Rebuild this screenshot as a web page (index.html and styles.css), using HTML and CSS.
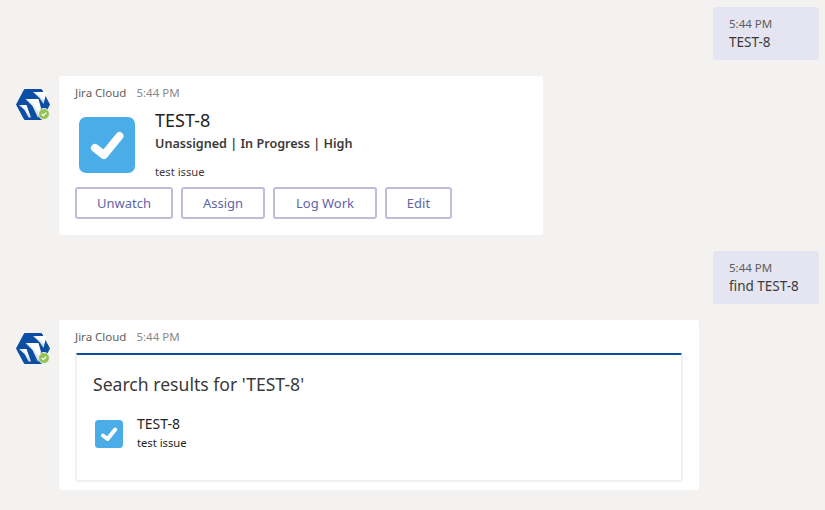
FILE: index.html
```html
<!DOCTYPE html>
<html>
  <head>
    <meta name="viewport" content="width=device-width, initial-scale=1.0">
    <title>Jira Cloud chat</title>
    <link rel="stylesheet" href="styles.css">
  </head>
  <body>
    <svg class="defs" width="0" height="0">
      <defs>
        <linearGradient id="arrow-fade" x1="1" y1="0" x2="0" y2="1">
          <stop offset="0.35" stop-color="#ffffff"/>
          <stop offset="1" stop-color="#4f78bf"/>
        </linearGradient>
        <symbol id="bot" viewBox="0 0 34 32">
          <path d="M8.5 0.5H25.5L33.5 15.5L25.5 30.5H8.5L0.5 15.5Z" fill="#0b4ea2" stroke="#0b4ea2" stroke-linejoin="round"/>
          <path d="M17 3H30.5L27.5 15L23.5 9Z" fill="url(#arrow-fade)"/>
          <path d="M9.5 10H22.5L25 19L22 29L16.5 17Z" fill="url(#arrow-fade)"/>
          <path d="M3 16H10.5L15 28.5H12.5L8.5 21Z" fill="url(#arrow-fade)"/>
          <circle cx="28" cy="25" r="5.5" fill="#92c353" stroke="#f3f2f1" stroke-width="1"/>
          <path d="M25.7 25L27.4 26.7L30.3 23.6" fill="none" stroke="#fff" stroke-width="1.2"/>
        </symbol>
        <symbol id="task" viewBox="0 0 56 56">
          <rect width="56" height="56" rx="7" fill="#4bade8"/>
          <path d="M16 31L25 38L40.5 19" fill="none" stroke="#fff" stroke-width="8" stroke-linecap="round" stroke-linejoin="round"/>
        </symbol>
      </defs>
    </svg>

    <div class="sent">
      <div class="bubble">
        <div class="time">5:44 PM</div>
        <div>TEST-8</div>
      </div>
    </div>

    <div class="received">
      <svg class="avatar"><use href="#bot"/></svg>
      <div class="card card-small">
        <div class="meta"><span>Jira Cloud</span><span class="meta-time">5:44 PM</span></div>
        <div class="issue">
          <svg class="issue-icon"><use href="#task"/></svg>
          <div>
            <div class="issue-title">TEST-8</div>
            <div class="issue-sub">Unassigned | In Progress | High</div>
            <div class="issue-desc">test issue</div>
          </div>
        </div>
        <div class="actions">
          <button class="btn-unwatch">Unwatch</button>
          <button class="btn-assign">Assign</button>
          <button class="btn-log">Log Work</button>
          <button class="btn-edit">Edit</button>
        </div>
      </div>
    </div>

    <div class="sent">
      <div class="bubble">
        <div class="time">5:44 PM</div>
        <div>find TEST-8</div>
      </div>
    </div>

    <div class="received">
      <svg class="avatar"><use href="#bot"/></svg>
      <div class="card card-wide">
        <div class="meta"><span>Jira Cloud</span><span class="meta-time">5:44 PM</span></div>
        <div class="results">
          <h2>Search results for 'TEST-8'</h2>
          <div class="result">
            <svg class="result-icon"><use href="#task"/></svg>
            <div>
              <div class="result-title">TEST-8</div>
              <div class="result-desc">test issue</div>
            </div>
          </div>
        </div>
      </div>
    </div>
  </body>
</html>
```

FILE: styles.css
```css
body {
  font-family: "Noto Sans", "Open Sans", sans-serif;
  margin: 0;
  padding: 7px 6px 0 16px;
  background-color: #f3f2f1;
  color: #252423;
  overflow: hidden;
}
.defs {
  position: absolute;
}
.sent {
  display: flex;
  justify-content: flex-end;
  margin-bottom: 16px;
}
.bubble {
  width: 106px;
  height: 53px;
  box-sizing: border-box;
  padding: 8px 16px;
  background-color: #e5e5f1;
  border-radius: 3px;
  font-size: 13.5px;
  line-height: 18px;
  color: #3b3a39;
}
.time {
  font-size: 11.5px;
  line-height: 17px;
  margin-bottom: 1px;
  color: #605e5c;
}
.received {
  display: flex;
  align-items: flex-start;
  margin-bottom: 16px;
}
.avatar {
  width: 34px;
  height: 32px;
  margin: 13px 9px 0 0;
  flex-shrink: 0;
}
.card {
  background-color: #fff;
  border-radius: 3px;
  box-sizing: border-box;
  padding: 9px 16px 8px;
}
.card-small {
  width: 484px;
  height: 159px;
}
.card-wide {
  width: 640px;
  height: 170px;
}
.meta {
  font-size: 11.5px;
  line-height: 16px;
  color: #605e5c;
  display: flex;
  gap: 10px;
}
.meta-time {
  color: #8a8886;
}
.issue {
  display: flex;
  margin-top: 8px;
  padding-left: 4px;
  gap: 20px;
}
.issue-icon {
  width: 56px;
  height: 56px;
  margin-top: 8px;
}
.issue-title {
  font-size: 18px;
  line-height: 24px;
  margin-top: -1px;
}
.issue-sub {
  font-size: 12.6px;
  font-weight: 600;
  line-height: 18px;
  margin-top: 3px;
  color: #3b3a39;
}
.issue-desc {
  font-size: 11.2px;
  line-height: 16px;
  margin-top: 11px;
  color: #3b3a39;
}
.actions {
  display: flex;
  gap: 8px;
  margin-top: 7px;
}
button {
  height: 32px;
  box-sizing: border-box;
  padding: 0;
  font-family: inherit;
  font-size: 13px;
  color: #6264a7;
  background-color: #fff;
  border: 2px solid #bdbddc;
  border-radius: 3px;
}
.btn-unwatch { width: 98px; }
.btn-assign { width: 84px; }
.btn-log { width: 104px; }
.btn-edit { width: 67px; }
.results {
  height: 129px;
  box-sizing: border-box;
  margin-top: 8px;
  padding: 17px 16px 0;
  border: 2px solid #f1f1f1;
  border-top: 2px solid #0b4ea2;
  border-radius: 3px;
}
h2 {
  margin: 0;
  font-size: 17.6px;
  font-weight: 400;
  line-height: 24px;
  color: #3b3a39;
}
.result {
  display: flex;
  gap: 14px;
  margin-top: 24px;
  padding-left: 2px;
}
.result-icon {
  width: 28px;
  height: 28px;
}
.result-title {
  font-size: 14px;
  line-height: 18px;
  margin-top: -5px;
}
.result-desc {
  font-size: 11.2px;
  line-height: 16px;
  margin-top: 2px;
}
```
